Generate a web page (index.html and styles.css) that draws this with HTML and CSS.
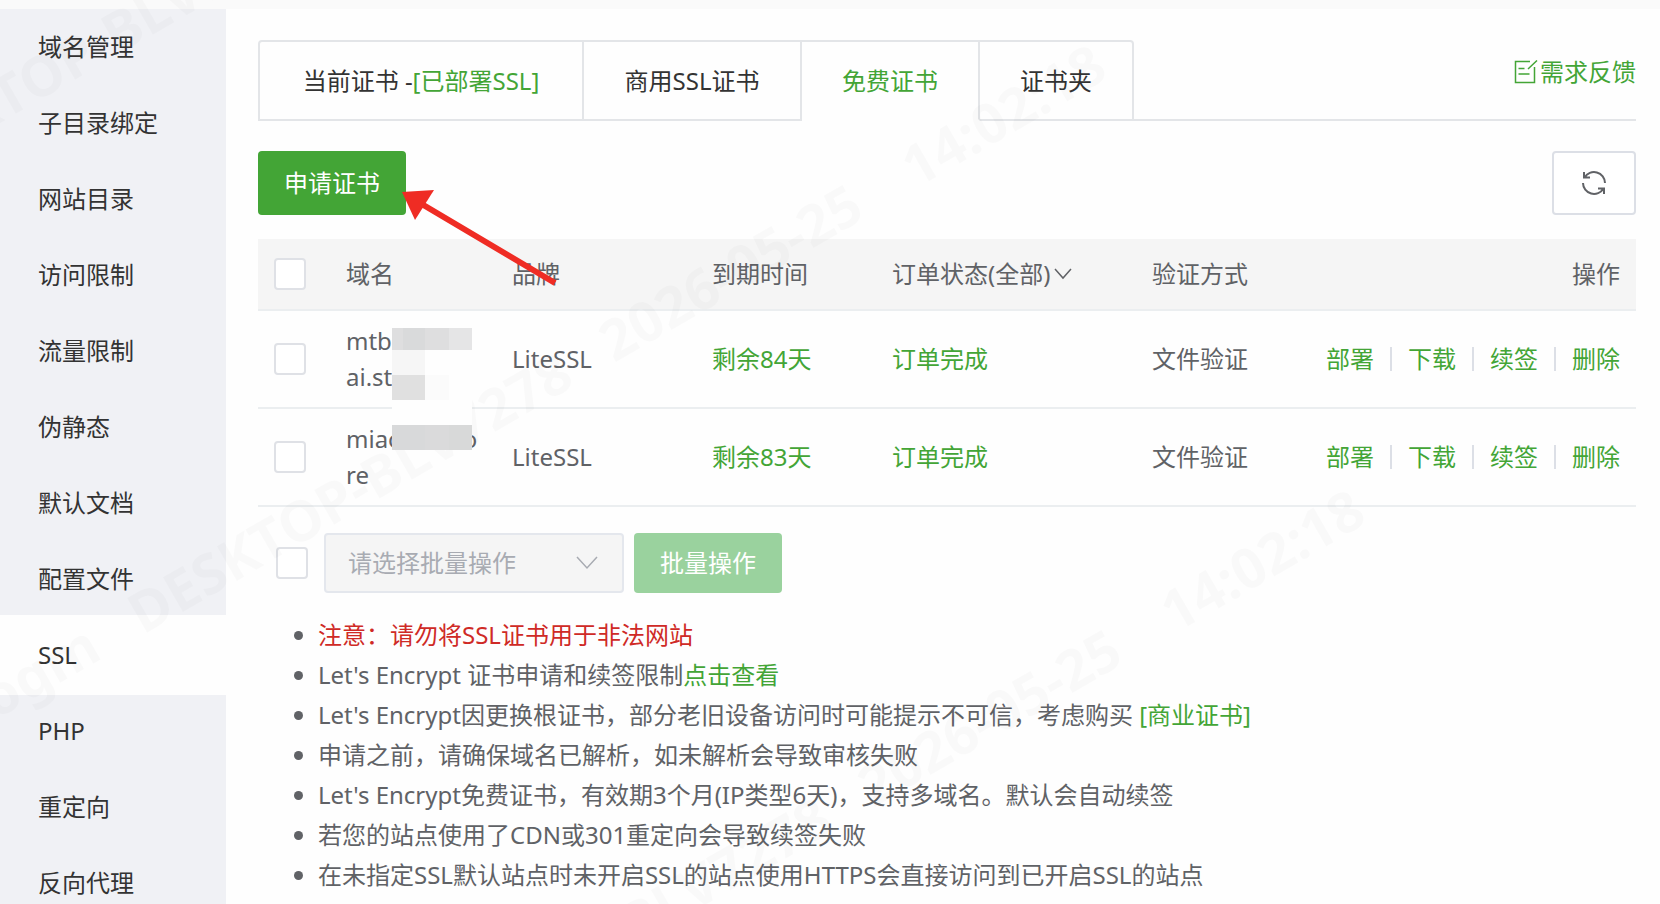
FILE: index.html
```html
<!DOCTYPE html>
<html lang="zh-CN">
<head>
  <meta charset="UTF-8" />
  <title>站点设置 - SSL</title>
  <link rel="stylesheet" href="styles.css">
</head>
<body>
  <div class="topbar"></div>
  <div class="layout">
    <nav class="sidebar">
      <a href="#">域名管理</a>
      <a href="#">子目录绑定</a>
      <a href="#">网站目录</a>
      <a href="#">访问限制</a>
      <a href="#">流量限制</a>
      <a href="#">伪静态</a>
      <a href="#">默认文档</a>
      <a href="#">配置文件</a>
      <a href="#" class="active">SSL</a>
      <a href="#">PHP</a>
      <a href="#">重定向</a>
      <a href="#">反向代理</a>
    </nav>

    <main class="content">
      <div class="tabs">
        <button type="button" class="tab tab-current">当前证书 -<span class="green">[已部署SSL]</span></button>
        <button type="button" class="tab tab-business">商用SSL证书</button>
        <button type="button" class="tab active">免费证书</button>
        <button type="button" class="tab">证书夹</button>
        <a href="#" class="feedback">
          <svg width="24" height="24" viewBox="0 0 24 24" fill="none" stroke="currentColor" stroke-width="1.5">
            <path d="M16 1.5H1.5V22.5H20.500V7M14 9L23 .5M4.500 8.500H10.500M4.500 14H15.500" />
          </svg>需求反馈</a>
      </div>

      <div class="toolbar">
        <button type="button" class="btn apply">申请证书</button>
        <button type="button" class="refresh" aria-label="刷新">
          <svg width="26" height="26" viewBox="0 0 26 26" fill="none" stroke="currentColor" stroke-width="2">
            <path d="M24 13A11 11 0 0 0 3.500 7.500M3 2V7.500H9M2 13A11 11 0 0 0 22.500 18.500M23 24V18.500H17" />
          </svg>
        </button>
        <svg class="arrow" width="160" height="100" viewBox="0 0 160 100">
          <path d="M20 13L155 93" stroke="#ef2c24" stroke-width="6" />
          <path d="M2 2L34 0L15 30Z" fill="#ef2c24" />
        </svg>
      </div>

      <table class="certs">
        <thead>
          <tr>
            <th class="col-check"><input type="checkbox" aria-label="全选"></th>
            <th class="col-domain">域名</th>
            <th class="col-brand">品牌</th>
            <th class="col-expire">到期时间</th>
            <th class="col-status"><button type="button" class="filter">订单状态(全部)<svg width="18" height="12" viewBox="0 0 18 12" fill="none" stroke="currentColor" stroke-width="1.5"><path d="M1 1L9 10L17 1" /></svg></button></th>
            <th class="col-verify">验证方式</th>
            <th class="col-actions">操作</th>
          </tr>
        </thead>
        <tbody>
          <tr>
            <td><input type="checkbox" aria-label="选择 mtb"></td>
            <td class="domain">mtb<br>ai.st
              <svg class="mosaic" width="80" height="122" viewBox="0 0 80 122" shape-rendering="crispEdges">
                <rect width="80" height="122" fill="#fefefe" />
                <rect width="11" height="22" fill="#dededf" />
                <rect x="11" width="22" height="22" fill="#d9dadb" />
                <rect x="33" width="24" height="22" fill="#dededf" />
                <rect x="57" width="23" height="22" fill="#e5e5e6" />
                <rect y="22" width="33" height="25" fill="#f6f6f6" />
                <rect y="47" width="33" height="25" fill="#e0e0e0" />
                <rect x="33" y="47" width="24" height="25" fill="#fbfbfb" />
                <rect y="97" width="33" height="25" fill="#d8d9da" />
                <rect x="33" y="97" width="24" height="25" fill="#dadadb" />
                <rect x="57" y="97" width="23" height="25" fill="#d8d9d9" />
              </svg>
            </td>
            <td>LiteSSL</td>
            <td class="green">剩余84天</td>
            <td class="green">订单完成</td>
            <td>文件验证</td>
            <td><div class="actions"><a href="#">部署</a><a href="#">下载</a><a href="#">续签</a><a href="#">删除</a></div></td>
          </tr>
          <tr>
            <td><input type="checkbox" aria-label="选择 miao"></td>
            <td class="domain">miao<span class="masked"></span>o<br>re</td>
            <td>LiteSSL</td>
            <td class="green">剩余83天</td>
            <td class="green">订单完成</td>
            <td>文件验证</td>
            <td><div class="actions"><a href="#">部署</a><a href="#">下载</a><a href="#">续签</a><a href="#">删除</a></div></td>
          </tr>
        </tbody>
      </table>

      <div class="bulk">
        <input type="checkbox" aria-label="全选">
        <div class="select">
          <select aria-label="批量操作" disabled>
            <option>请选择批量操作</option>
          </select>
          <svg width="22" height="14" viewBox="0 0 22 14" fill="none" stroke="currentColor" stroke-width="1.5"><path d="M1 1L11 12L21 1" /></svg>
        </div>
        <button type="button" class="btn" disabled>批量操作</button>
      </div>

      <ul class="notes">
        <li><span class="red">注意：请勿将SSL证书用于非法网站</span></li>
        <li>Let's Encrypt 证书申请和续签限制<a href="#">点击查看</a></li>
        <li>Let's Encrypt因更换根证书，部分老旧设备访问时可能提示不可信，考虑购买 <a href="#">[商业证书]</a></li>
        <li>申请之前，请确保域名已解析，如未解析会导致审核失败</li>
        <li>Let's Encrypt免费证书，有效期3个月(IP类型6天)，支持多域名。默认会自动续签</li>
        <li>若您的站点使用了CDN或301重定向会导致续签失败</li>
        <li>在未指定SSL默认站点时未开启SSL的站点使用HTTPS会直接访问到已开启SSL的站点</li>
      </ul>
    </main>
  </div>

  <!-- watermark -->
  <svg class="watermark" aria-hidden="true">
    <g transform="translate(-116 190) rotate(-30)">
      <text x="0">DESKTOP-BLV7278</text>
    </g>
    <g transform="translate(143 635) rotate(-30)">
      <text x="-170">ogm</text>
      <text x="0">DESKTOP-BLV7278</text>
      <text x="544">2026-05-25</text>
      <text x="893">14:02:18</text>
    </g>
    <g transform="translate(402 1080) rotate(-30)">
      <text x="0">DESKTOP-BLV7278</text>
      <text x="544">2026-05-25</text>
      <text x="893">14:02:18</text>
    </g>
  </svg>
</body>
</html>
```
FILE: styles.css
```css
* { box-sizing: border-box; }
body { margin: 0; height: 100vh; overflow: hidden; display: flex; flex-direction: column; background: #fefefe; color: #606266; font: 24px/36px "Noto Sans", "Noto Sans CJK SC", sans-serif; }
a { color: #43a536; text-decoration: none; }
button, select { font: inherit; color: inherit; cursor: pointer; }
.green { color: #43a536; }
.red { color: #cf2a26; }

.topbar { flex: none; height: 9px; background: #fafafa; }
.layout { flex: 1; display: flex; min-height: 0; }

/* sidebar */
.sidebar { flex: none; width: 226px; background: #f0f1f5; overflow: hidden; }
.sidebar a { display: block; height: 76px; padding-left: 38px; line-height: 76px; color: #333; }
.sidebar a.active { height: 80px; margin: -2px 0; line-height: 80px; background: #fefefe; }

.content { flex: 1; min-width: 0; padding: 31px 24px 0 32px; }

/* tabs */
.tabs { display: flex; height: 81px; border-bottom: 2px solid #e3e5e8; }
.tab { height: 81px; padding: 0 40px; border: 2px solid #e3e5e8; border-left-width: 0; background: #fefefe; color: #333; white-space: nowrap; }
.tab:first-child { border-left-width: 2px; border-top-left-radius: 4px; }
.tab:nth-child(4) { border-top-right-radius: 4px; }
.tab-current { min-width: 326px; }
.tab-business { min-width: 218px; }
.tab.active { border-bottom-color: #fefefe; color: #43a536; }
.feedback { display: flex; align-items: center; gap: 2px; height: 36px; margin: 14px 0 0 auto; }

/* toolbar */
.toolbar { position: relative; display: flex; justify-content: space-between; margin: 30px 0 24px; }
.btn { width: 148px; height: 60px; padding: 0; border: 0; border-radius: 4px; background: #43a536; color: #fff; }
.btn.apply { height: 64px; }
.btn:disabled { background: #9ad29e; }
.refresh { display: flex; align-items: center; justify-content: center; width: 84px; height: 64px; border: 2px solid #dcdfe6; border-radius: 4px; background: #fff; }
.arrow { position: absolute; left: 142px; top: 39px; z-index: 4; }

input[type="checkbox"] { appearance: none; display: block; width: 32px; height: 32px; margin: 0; border: 2px solid #dfe1e6; border-radius: 4px; background: #fff; }

/* table */
.certs { width: 100%; table-layout: fixed; border-collapse: separate; border-spacing: 0; }
.certs th, .certs td { padding: 12px 16px; border-bottom: 2px solid #ebeef0; text-align: left; font-weight: normal; white-space: nowrap; }
.certs th { height: 72px; background: #f5f5f5; }
.col-check { width: 72px; }
.col-domain { width: 166px; }
.col-brand { width: 200px; }
.col-expire { width: 180px; }
.col-status { width: 260px; }
.col-verify { width: 160px; }
.certs .col-actions { text-align: right; }
.filter { display: flex; align-items: center; gap: 4px; padding: 0; border: 0; background: none; }
.domain { position: relative; }
.mosaic { position: absolute; left: 62px; top: 17px; z-index: 4; }
.masked { display: inline-block; width: 60px; }
.actions { display: flex; justify-content: flex-end; align-items: center; }
.actions a { line-height: 24px; }
.actions a + a { margin-left: 16px; padding-left: 16px; border-left: 2px solid #dcdfe6; }

/* bulk actions */
.bulk { display: flex; align-items: center; margin: 26px 0 22px 18px; }
.select { position: relative; margin: 0 10px 0 16px; color: #a8abb2; }
.select select { appearance: none; display: block; width: 300px; height: 60px; padding: 0 22px; border: 2px solid #e4e7ed; border-radius: 4px; background: #f5f5f5; color: #a8abb2; opacity: 1; }
.select svg { position: absolute; right: 26px; top: 23px; pointer-events: none; }

.notes { margin: 0; padding-left: 60px; line-height: 40px; }

.watermark { position: fixed; left: 0; top: 0; width: 100%; height: 100%; z-index: 3; pointer-events: none; font-size: 56px; font-weight: bold; fill: rgba(0, 0, 0, .02); }
```
